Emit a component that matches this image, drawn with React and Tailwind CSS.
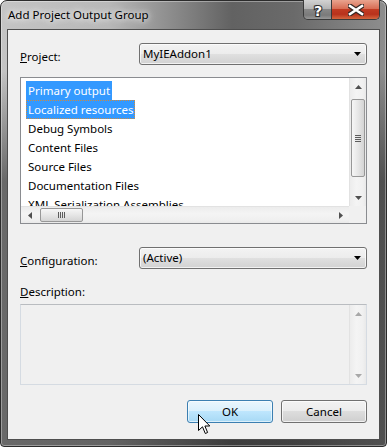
const tri = {
  up: 'M0 4L3.5 0L7 4z',
  down: 'M0 0h7L3.5 4z',
  left: 'M4 0v7L0 3.5z',
  right: 'M0 0v7l4-3.5z',
};

function Arrow({ dir, color = '#505050' }) {
  const vertical = dir === 'up' || dir === 'down';
  return (
    <svg width={vertical ? 7 : 4} height={vertical ? 4 : 7} viewBox={vertical ? '0 0 7 4' : '0 0 4 7'}>
      <path d={tri[dir]} fill={color} />
    </svg>
  );
}

function VScroll({ disabled }) {
  const c = disabled ? '#a8a8a8' : '#505050';
  return (
    <div className="w-[17px] flex flex-col border-l border-[#e2e2e2] bg-[linear-gradient(90deg,#ececec,#f4f4f4_40%,#f0f0f0_80%,#e9e9e9)]">
      <div className="h-[17px] flex items-center justify-center"><Arrow dir="up" color={c} /></div>
      {disabled ? (
        <div className="flex-1" />
      ) : (
        <>
          <div className="mt-[4px] mx-[1px] h-[78px] rounded-[2px] border border-[#979797] bg-[linear-gradient(90deg,#f6f6f6,#e6e6e6_50%,#d4d4d4)] flex flex-col items-center justify-center gap-[1px]">
            <div className="w-[6px] h-px bg-[#5c5c5c]" />
            <div className="w-[6px] h-px bg-[#5c5c5c]" />
            <div className="w-[6px] h-px bg-[#5c5c5c]" />
            <div className="w-[6px] h-px bg-[#5c5c5c]" />
          </div>
          <div className="flex-1" />
        </>
      )}
      <div className="h-[17px] flex items-center justify-center"><Arrow dir="down" color={c} /></div>
    </div>
  );
}

function HScroll() {
  return (
    <div className="flex-1 flex border-t border-[#e2e2e2] bg-[linear-gradient(180deg,#ececec,#f4f4f4_40%,#f0f0f0_80%,#e9e9e9)]">
      <div className="w-[17px] flex items-center justify-center"><Arrow dir="left" /></div>
      <div className="ml-[2px] my-[1px] w-[43px] rounded-[2px] border border-[#979797] bg-[linear-gradient(180deg,#f6f6f6,#e6e6e6_50%,#d4d4d4)] flex items-center justify-center gap-[1px]">
        <div className="w-px h-[6px] bg-[#5c5c5c]" />
        <div className="w-px h-[6px] bg-[#5c5c5c]" />
        <div className="w-px h-[6px] bg-[#5c5c5c]" />
        <div className="w-px h-[6px] bg-[#5c5c5c]" />
      </div>
      <div className="flex-1" />
      <div className="w-[17px] flex items-center justify-center"><Arrow dir="right" /></div>
    </div>
  );
}

function Combo({ text }) {
  return (
    <div className="w-[228px] h-[22px] rounded-[3px] border border-[#707070] bg-[linear-gradient(180deg,#f3f3f3_0%,#ececec_50%,#e0e0e0_50%,#d2d2d2_100%)] shadow-[inset_0_0_0_1px_rgba(255,255,255,0.7)] flex items-center pl-[3px] pr-[5px]">
      <span className="flex-1 leading-[16px]">{text}</span>
      <Arrow dir="down" color="#000" />
    </div>
  );
}

const items = [
  'Primary output',
  'Localized resources',
  'Debug Symbols',
  'Content Files',
  'Source Files',
  'Documentation Files',
  'XML Serialization Assemblies',
];

export default function App() {
  return (
    <div className="relative w-[387px] h-[447px] overflow-hidden bg-white font-['Noto_Sans',sans-serif] text-[11.5px] text-black">
      <div className="w-[387px] h-[447px] flex flex-col rounded-t-[7px] rounded-b-[4px] border border-[#2b2b2b] px-[6px] pb-[6px] shadow-[inset_0_0_0_1px_rgba(255,255,255,0.35)] bg-[linear-gradient(180deg,rgba(30,30,30,0)_0px,rgba(30,30,30,0)_70px,rgba(30,30,30,0.55)_180px,rgba(30,30,30,0.55)_100%),linear-gradient(90deg,#c4c4c4_0%,#b8b8b8_28%,#8a8a8a_45%,#626262_60%,#6a6a6a_76%,#8e8e8e_100%)]">
        {/* title bar */}
        <div className="h-[28px] flex items-start">
          <span className="mt-[6px] pl-px leading-[16px] whitespace-nowrap [text-shadow:0_0_6px_#fff,0_0_10px_rgba(255,255,255,0.8)]">
            Add Project Output Group
          </span>
          <div className="ml-auto -mt-px flex h-[20px] rounded-b-[5px] border border-t-0 border-[#3a3a3a] overflow-hidden">
            <div className="w-[28px] h-full border-r border-[#3a3a3a] bg-[linear-gradient(180deg,#d2d2d2_0%,#b4b4b4_45%,#888888_50%,#7a7a7a_80%,#989898_100%)] flex items-center justify-center">
              <svg width="14" height="18" viewBox="0 0 14 18">
                <text x="7" y="15" textAnchor="middle" fontSize="14" fontWeight="bold" fontFamily="DejaVu Sans" fill="#fff" stroke="#2e2e2e" strokeWidth="2.2" paintOrder="stroke">?</text>
              </svg>
            </div>
            <div className="w-[47px] h-full bg-[linear-gradient(180deg,#e9a48f_0%,#d86e55_45%,#c13b22_50%,#b8321c_75%,#d4663e_100%)] flex items-center justify-center">
              <svg width="16" height="12" viewBox="0 0 16 12">
                <path d="M2 2L14 10M14 2L2 10" stroke="#3a2a26" strokeWidth="5" strokeLinecap="square" />
                <path d="M2 2L14 10M14 2L2 10" stroke="#fff" strokeWidth="2.6" strokeLinecap="square" />
              </svg>
            </div>
          </div>
        </div>

        {/* client area */}
        <div className="flex-1 border border-[#4e4e4e] bg-[#f0f0f0] flex flex-col px-[12px] pt-[13px]">
          <div className="flex items-start">
            <span className="w-[119px] mt-[6px] leading-[16px]"><span className="underline">P</span>roject:</span>
            <Combo text="MyIEAddon1" />
          </div>

          <div className="mt-[12px] h-[147px] border border-[#8a8c90] bg-white flex flex-col">
            <div className="flex flex-1 min-h-0">
              <div className="flex-1 overflow-hidden pl-[5px] pt-[3px] flex flex-col items-start">
                {items.map((t, i) => (
                  <span
                    key={t}
                    className={`shrink-0 h-[19px] leading-[19px] px-[2px] whitespace-nowrap ${
                      i === 0 ? 'bg-[#3399ff] text-white' : i === 1 ? 'bg-[#3399ff] text-white outline outline-1 outline-dotted outline-[#d08a3a] -outline-offset-1' : ''
                    }`}
                  >
                    {t}
                  </span>
                ))}
              </div>
              <VScroll />
            </div>
            <div className="flex h-[17px]">
              <HScroll />
              <div className="w-[17px] bg-[#f0f0f0]" />
            </div>
          </div>

          <div className="mt-[23px] flex items-start">
            <span className="w-[119px] mt-[6px] leading-[16px]"><span className="underline">C</span>onfiguration:</span>
            <Combo text="(Active)" />
          </div>

          <span className="mt-[15px] leading-[16px]"><span className="underline">D</span>escription:</span>

          <div className="mt-[4px] h-[81px] flex border border-[#d5dbe2] border-t-[#b9bcc0] bg-[#f0f0f0]">
            <div className="flex-1" />
            <VScroll disabled />
          </div>

          <div className="mt-[15px] flex justify-end gap-[8px]">
            <button className="w-[86px] h-[23px] rounded-[3px] border border-[#3c7fb1] bg-[linear-gradient(180deg,#eaf6fd_0%,#d9f0fc_50%,#bee6fd_50%,#a7d9f5_100%)] shadow-[inset_0_0_0_1px_rgba(255,255,255,0.6)] leading-[16px]">
              OK
            </button>
            <button className="w-[86px] h-[23px] rounded-[3px] border border-[#707070] bg-[linear-gradient(180deg,#f2f2f2_0%,#ebebeb_50%,#dddddd_50%,#cfcfcf_100%)] shadow-[inset_0_0_0_1px_rgba(255,255,255,0.7)] leading-[16px]">
              Cancel
            </button>
          </div>
        </div>
      </div>

      {/* mouse pointer */}
      <svg className="absolute left-[198px] top-[414px]" width="13" height="21" viewBox="0 0 13 21">
        <path d="M0.5 0.5V16.5L4.5 12.8L7.3 19.5L9.6 18.5L6.9 12H11.8Z" fill="#fff" stroke="#000" strokeWidth="1" strokeLinejoin="round" />
      </svg>
    </div>
  );
}
